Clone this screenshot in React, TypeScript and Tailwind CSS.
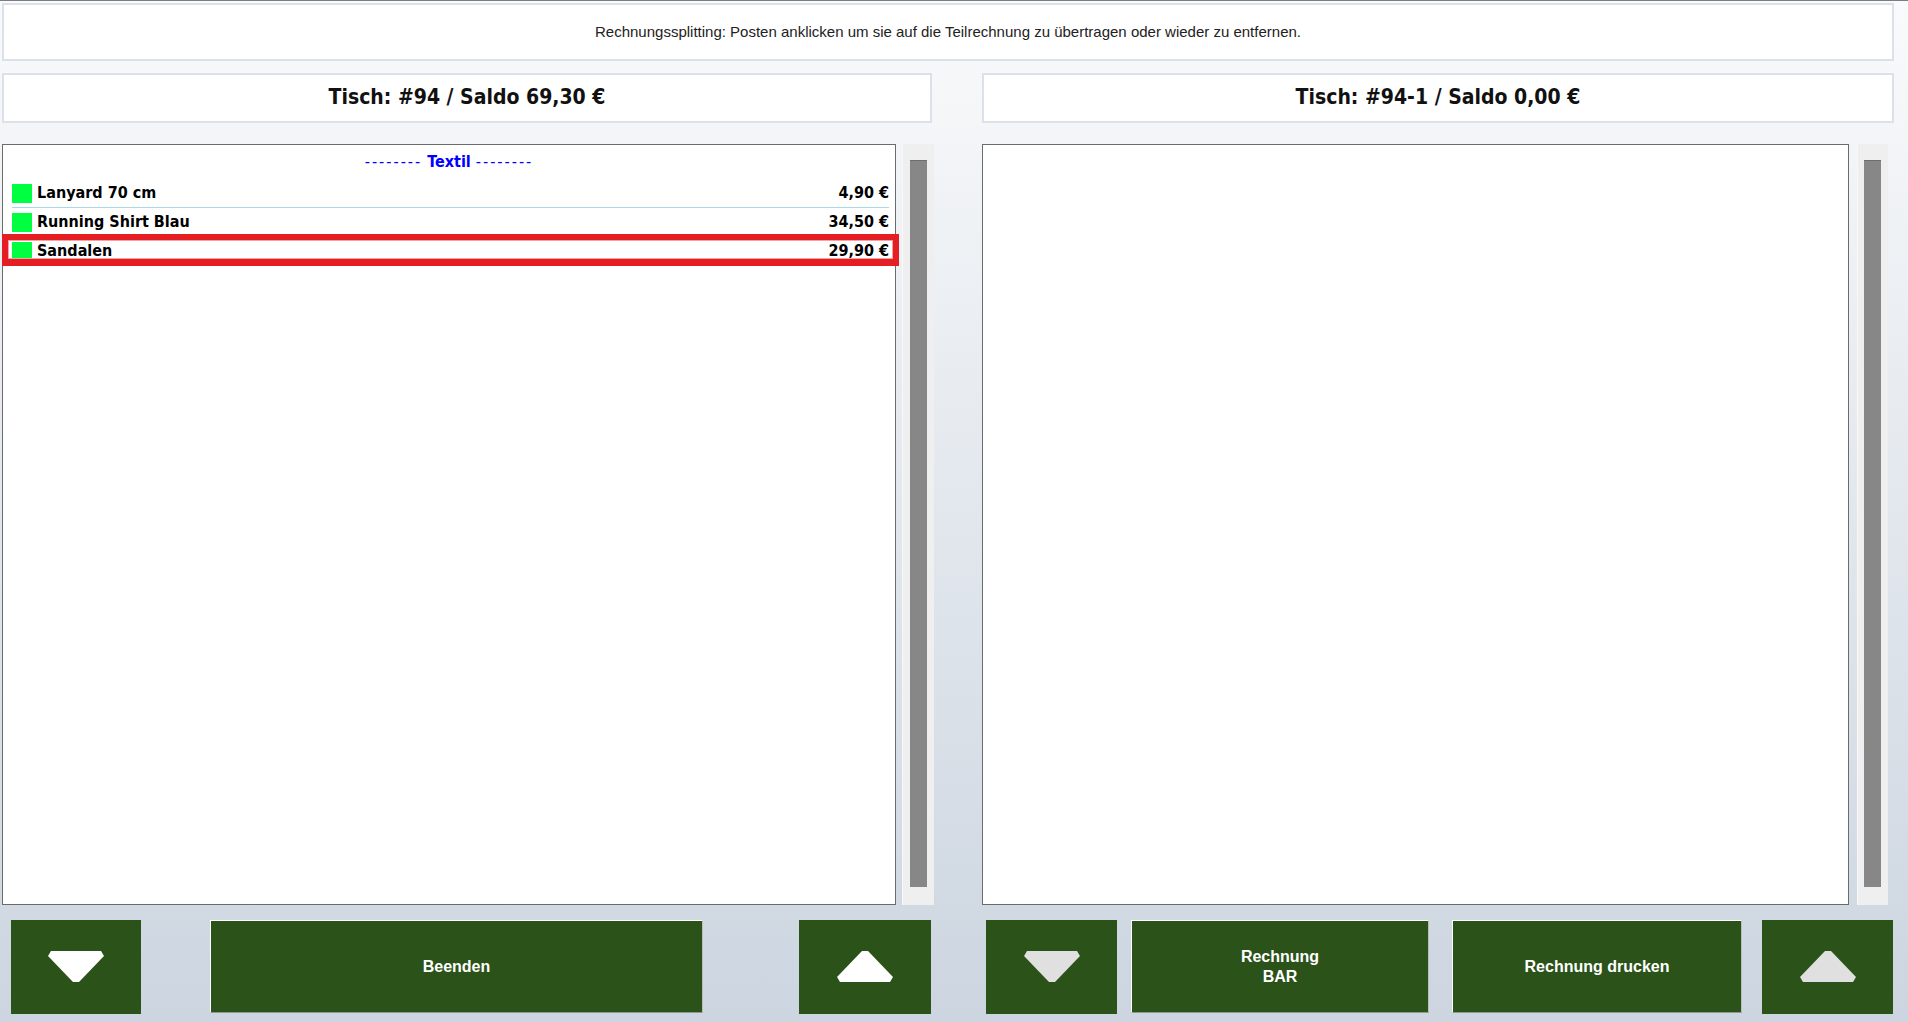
import React from 'react';

type Item = { name: string; price: string; selected?: boolean };

const ITEMS: Item[] = [
  { name: 'Lanyard 70 cm', price: '4,90 €' },
  { name: 'Running Shirt Blau', price: '34,50 €' },
  { name: 'Sandalen', price: '29,90 €', selected: true },
];

const GREEN = 'bg-[#2a5219]';

const ArrowDown: React.FC<{ color: string }> = ({ color }) => (
  <svg width="56" height="32" viewBox="0 0 56 32">
    <path d="M3 0 H53 L56 5 L31 31 H25 L0 5 Z" fill={color} />
  </svg>
);

const ArrowUp: React.FC<{ color: string }> = ({ color }) => (
  <svg width="56" height="32" viewBox="0 0 56 32">
    <path d="M25 0 H31 L56 26 L53 31 H3 L0 26 Z" fill={color} />
  </svg>
);

const ArrowButton: React.FC<{ up?: boolean; color: string; className?: string }> = ({ up, color, className }) => (
  <button className={`h-[94px] ${GREEN} flex items-center justify-center shrink-0 ${className ?? ''}`}>
    {up ? <ArrowUp color={color} /> : <ArrowDown color={color} />}
  </button>
);

const TextButton: React.FC<{ className?: string; children: React.ReactNode }> = ({ className, children }) => (
  <button
    className={`h-[93px] ${GREEN} shrink-0 border border-t-white border-l-white border-r-[#b7c0b7] border-b-[#8e988e] text-white font-bold text-[16px] leading-[20px] flex items-center justify-center text-center ${className ?? ''}`}
  >
    {children}
  </button>
);

const TitleBox: React.FC<{ className?: string; children: React.ReactNode }> = ({ className, children }) => (
  <div
    className={`h-[50px] border-2 border-[#dbe1ea] bg-white flex items-center justify-center font-['DejaVu_Sans_Condensed','DejaVu_Sans',sans-serif] font-bold text-[21px] text-[#111] ${className ?? ''}`}
  >
    {children}
  </div>
);

const Track: React.FC<{ className?: string }> = ({ className }) => (
  <div className={`h-full bg-[#efefef] border-l border-[#f8f8f8] pt-[16px] pb-[18px] ${className ?? ''}`}>
    <div className="w-[17px] h-full bg-[#878787] border-t border-[#6e6e6e]" />
  </div>
);

const Row: React.FC<{ item: Item }> = ({ item }) => (
  <div className="relative h-[29px] ml-[9px] mr-[6px] border-b border-[#a9d9e8] flex items-center">
    <span className="w-[20px] h-[19px] bg-[#00ff40] mr-[5px] shrink-0" />
    <span className="flex-1 font-bold text-[16px] text-black">{item.name}</span>
    <span className="font-bold text-[16px] text-black">{item.price}</span>
    {item.selected && (
      <span className="absolute -top-[3px] -bottom-[1px] -left-[10px] -right-[10px] border-[6px] border-b-[7px] border-[#e41e22] shadow-[inset_0_0_0_1px_#f4a3a3]" />
    )}
  </div>
);

export default function App() {
  return (
    <div className="w-[1908px] h-[1022px] overflow-hidden bg-linear-to-b from-[#f9fafb] to-[#ccd5e0] font-['Liberation_Sans',Arial,sans-serif]">
      <div className="h-px bg-[#7d7d7d]" />
      <div className="pl-[2px] pr-[14px] pt-[2px]">
        <div className="h-[58px] border-2 border-[#dbe1ea] bg-white flex items-center justify-center text-[15px] text-[#222]">
          Rechnungssplitting: Posten anklicken um sie auf die Teilrechnung zu übertragen oder wieder zu entfernen.
        </div>

        <div className="mt-[12px] flex gap-[48px]">
          {/* linke Rechnung */}
          <div className="w-[932px] flex flex-col shrink-0">
            <TitleBox className="w-[930px]">Tisch: #94 / Saldo 69,30 €</TitleBox>
            <div className="mt-[21px] h-[761px] flex gap-[6px]">
              <div className="w-[894px] border border-[#6b6b6b] bg-white font-['DejaVu_Sans_Condensed','DejaVu_Sans',sans-serif]">
                <div className="h-[34px] flex items-center justify-center text-[16px] text-[#0000ff]">
                  <span className="tracking-[2px]">--------</span>
                  <span className="font-bold mx-[5px]">Textil</span>
                  <span className="tracking-[2px]">--------</span>
                </div>
                {ITEMS.map((item) => (
                  <Row key={item.name} item={item} />
                ))}
              </div>
              <Track className="w-[32px] pl-[7px]" />
            </div>
            <div className="mt-[15px] flex">
              <ArrowButton color="#ffffff" className="w-[130px] ml-[9px]" />
              <TextButton className="w-[493px] ml-[69px]">Beenden</TextButton>
              <ArrowButton up color="#ffffff" className="w-[132px] ml-[96px]" />
            </div>
          </div>

          {/* Teilrechnung */}
          <div className="w-[912px] flex flex-col shrink-0">
            <TitleBox className="w-[912px]">Tisch: #94-1 / Saldo 0,00 €</TitleBox>
            <div className="mt-[21px] h-[761px] flex gap-[8px]">
              <div className="w-[867px] border border-[#6b6b6b] bg-white" />
              <Track className="w-[31px] pl-[6px]" />
            </div>
            <div className="mt-[15px] flex">
              <ArrowButton color="#e0e0e0" className="w-[131px] ml-[4px]" />
              <TextButton className="w-[298px] ml-[14px]">
                Rechnung
                <br />
                BAR
              </TextButton>
              <TextButton className="w-[290px] ml-[23px]">Rechnung drucken</TextButton>
              <ArrowButton up color="#e0e0e0" className="w-[131px] ml-[20px]" />
            </div>
          </div>
        </div>
      </div>
    </div>
  );
}
